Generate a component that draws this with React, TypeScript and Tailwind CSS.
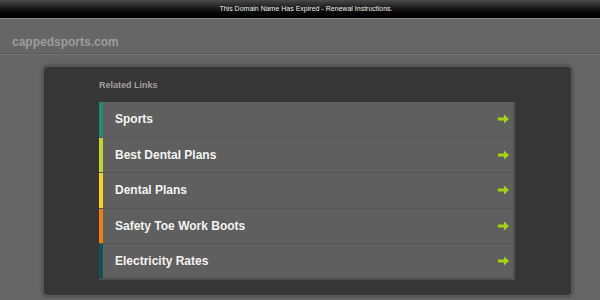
const links = [
  { label: 'Sports', color: 'bg-[#1f8a6c]' },
  { label: 'Best Dental Plans', color: 'bg-[#c3d72b]' },
  { label: 'Dental Plans', color: 'bg-[#f7d417]' },
  { label: 'Safety Toe Work Boots', color: 'bg-[#f07c0c]' },
  { label: 'Electricity Rates', color: 'bg-[#194d5c]' },
];

function Arrow() {
  return (
    <svg width="11" height="10" viewBox="0 0 11 10" className="shrink-0">
      <path d="M0 3.6h6V0.6L11 5 6 9.4V6.4H0z" fill="#a8d40c" />
    </svg>
  );
}

export default function App() {
  return (
    <div className="h-[300px] w-[600px] overflow-hidden bg-[#666666] font-['Liberation_Sans',Arial,sans-serif]">
      <div className="flex h-[19px] items-center justify-center border-b border-[#8a8a8a] bg-gradient-to-b from-[#4a4a4a] to-[#000000] pl-[12px]">
        <span className="text-[7px] text-[#e8e8e8]">This Domain Name Has Expired - Renewal Instructions.</span>
      </div>
      <div className="flex h-[35px] items-end border-b border-[#5a5a5a] px-[12px] pb-[2px] shadow-[0_1px_0_#727272]">
        <span className="text-[12px] font-bold text-[#9c9c9c]">cappedsports.com</span>
      </div>
      <div className="ml-[42px] mt-[11px] h-[232px] w-[531px] rounded-[6px] border-2 border-[#575757] bg-[#363636] shadow-[0_0_3px_rgba(0,0,0,0.35)]">
        <div className="pl-[55px] pt-[12px]">
          <div className="text-[9px] font-bold text-[#a0a0a0]">Related Links</div>
          <ul className="mt-[9px] w-[416px] border-b-2 border-r-2 border-[#505050]">
            {links.map((link, i) => (
              <li
                key={link.label}
                className={`flex h-[35.4px] items-center bg-[#5f5f5f] ${i > 0 ? 'border-t border-[#575757]' : ''}`}
              >
                <div className={`h-full w-[4px] ${link.color}`} />
                <span className="ml-[12px] flex-1 text-[12px] font-bold text-[#f2f2f2]">{link.label}</span>
                <div className="mr-[4px]">
                  <Arrow />
                </div>
              </li>
            ))}
          </ul>
        </div>
      </div>
    </div>
  );
}
